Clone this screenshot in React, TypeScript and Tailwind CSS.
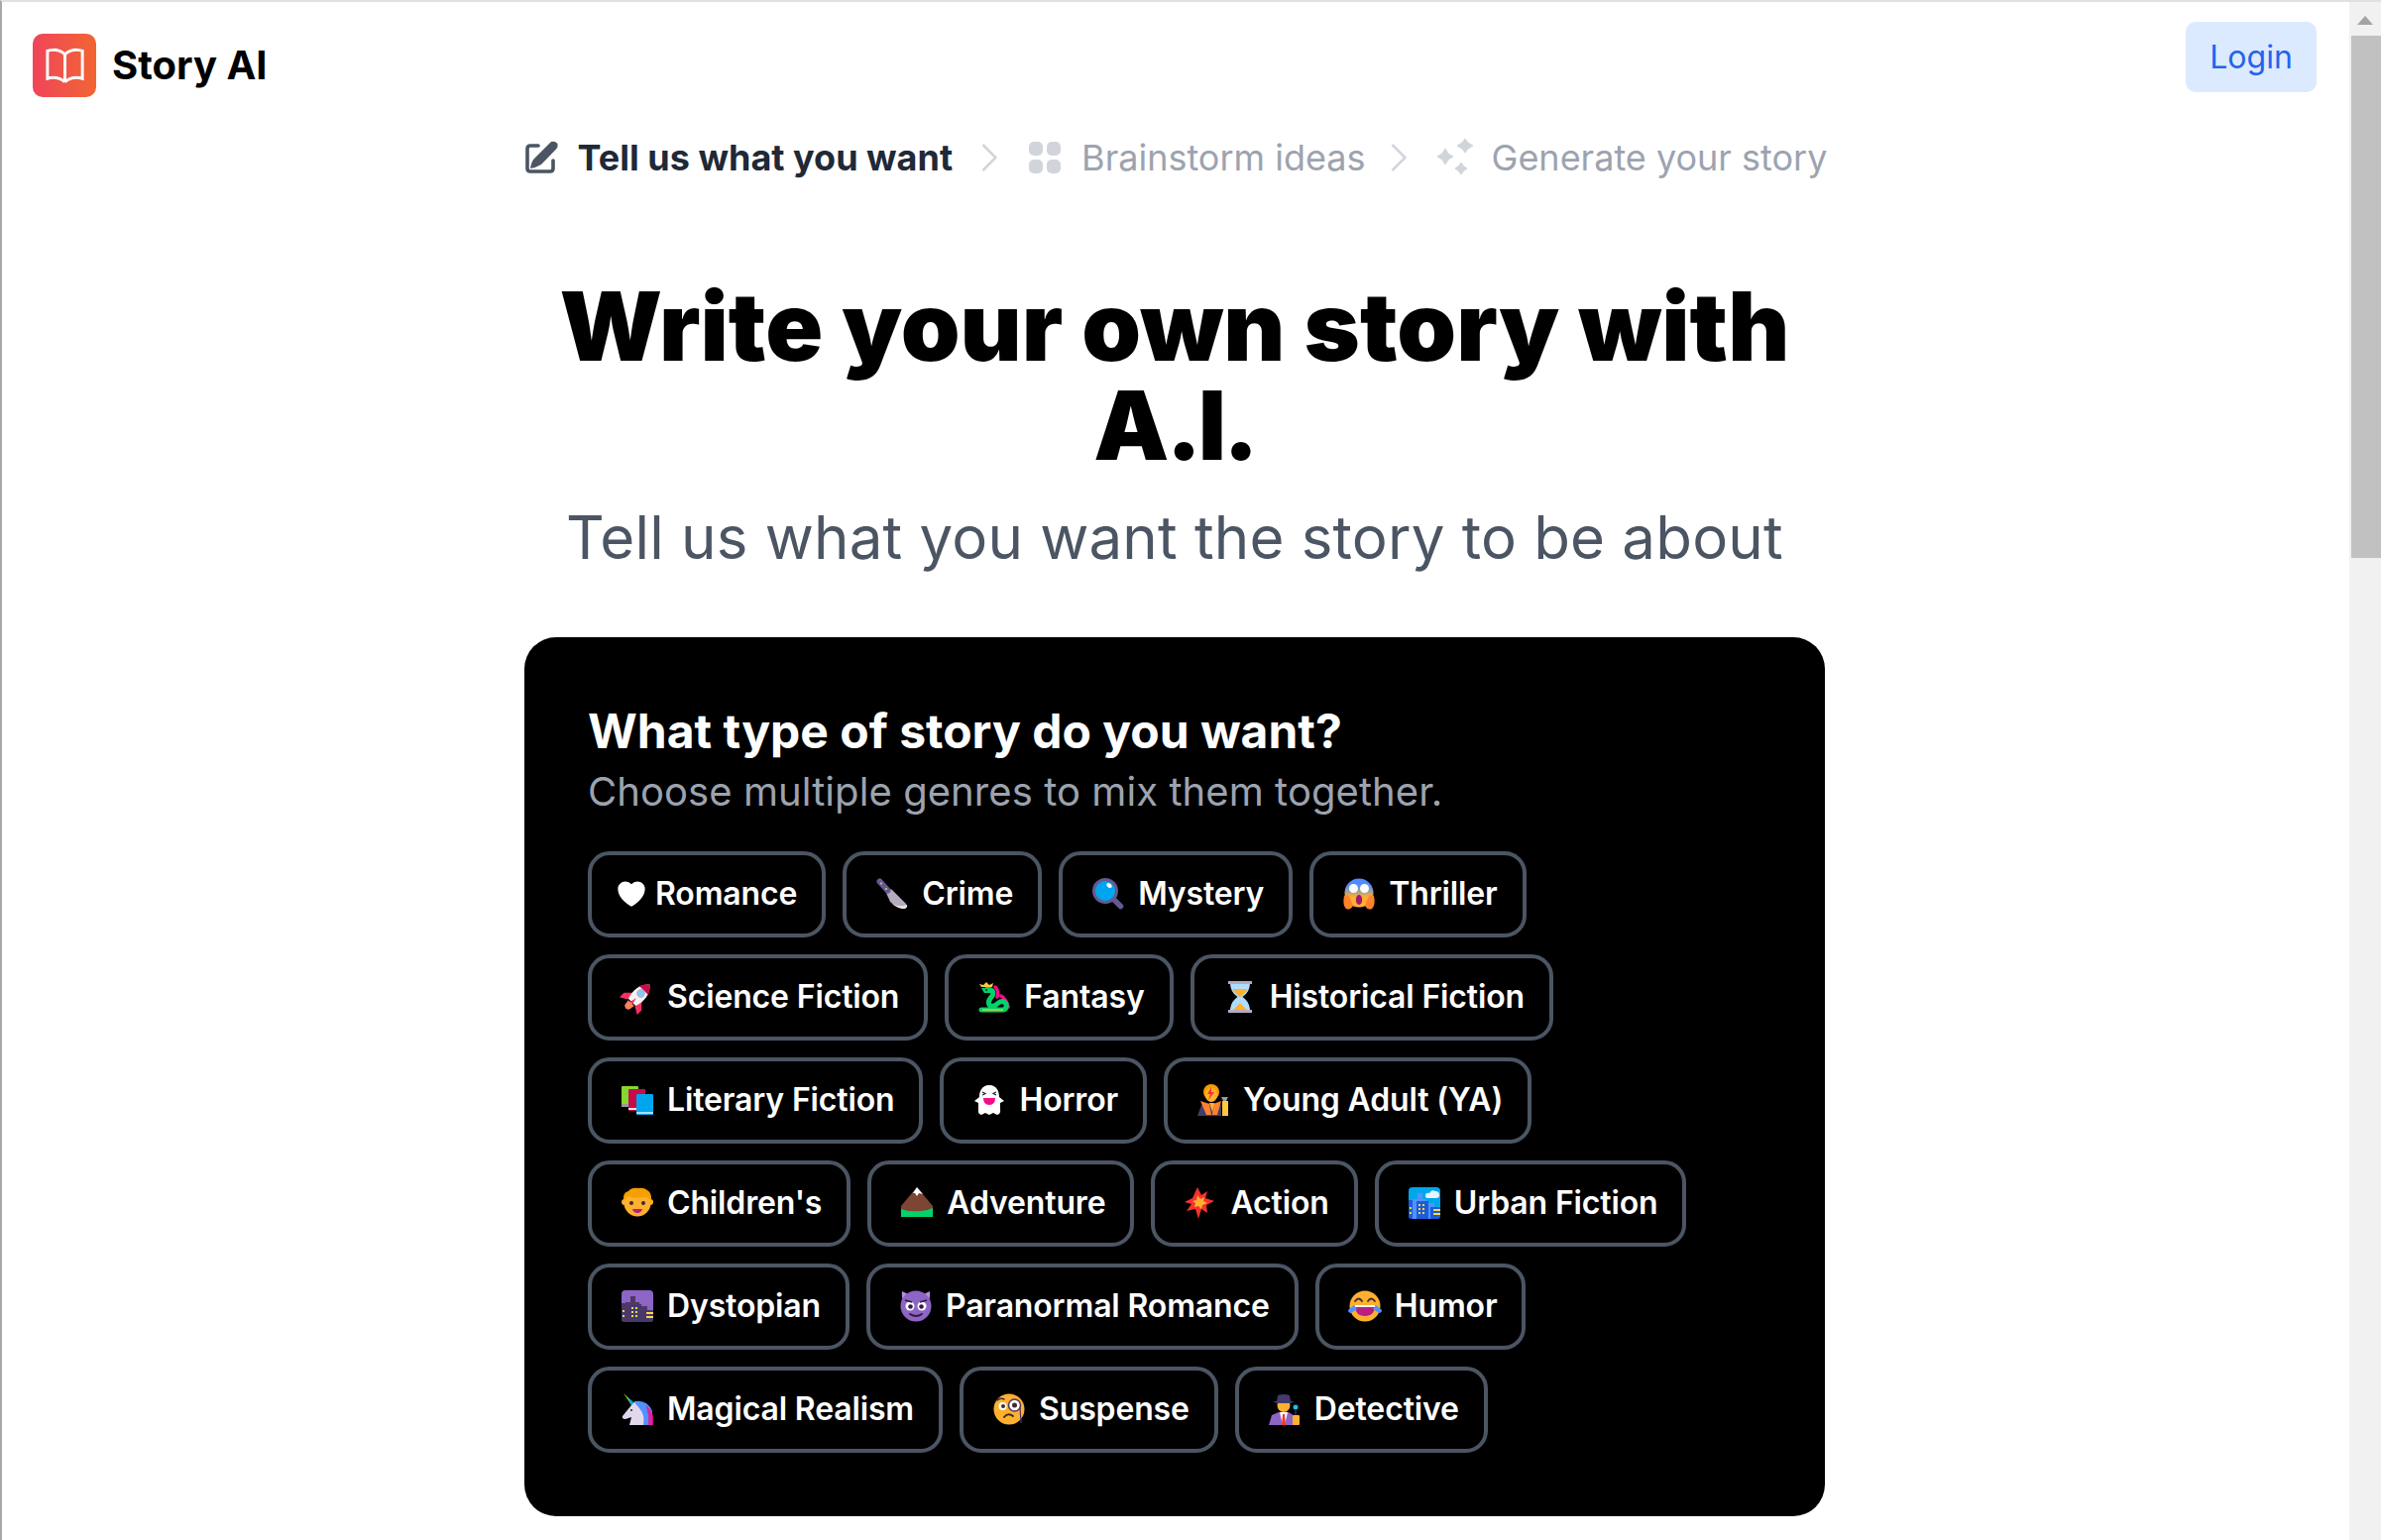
import type { ReactNode } from 'react';

function Svg({ children }: { children: ReactNode }) {
  return (
    <span className="w-10 flex justify-center">
      <svg width="32" height="32" viewBox="0 0 32 32" className="overflow-visible">{children}</svg>
    </span>
  );
}

function City({ bg, back, front, win, cloud }: { bg: string; back: string; front: string; win: string; cloud?: boolean }) {
  return (
    <Svg>
      <rect width="32" height="32" rx="4" fill={bg} />
      {cloud && <path d="M17 9Q17 5 21 6 23 2 27 4 31 4 31 8 31 11 28 11H20Q17 11 17 9Z" fill="#e6f4ff" />}
      <path d="M4 32V12h5V6h5v6h4v4h8v5h6v7q0 4-4 4Z" fill={back} />
      <path d="M0 13h4v19H3q-3 0-3-3Z" fill={front} />
      <path d="M8 32V14h12v18Z" fill={front} />
      <path d="M22 32V20h10v9q0 3-3 3Z" fill={front} />
      <path d="M10 17h2v2h-2zM14 17h2v2h-2zM10 21h2v2h-2zM14 21h2v2h-2zM10 25h2v2h-2zM14 25h2v2h-2zM1 20h2v2H1zM1 25h2v2H1z" fill={win} />
      <path d="M25 22h7v2h-7zM25 26h7v2h-7z" fill={win} />
    </Svg>
  );
}

const icons: Record<string, ReactNode> = {
  Crime: (
    <Svg>
      <path d="M10 15 15 11 30 26Q32 30 28 31 20 30 14 24Z" fill="#b4acbc" />
      <path d="M16 26Q22 31 28 31 32 30 31 27 24 30 16 26Z" fill="#e6e6e6" />
      <path d="M3.5 3.5 11.500 12.500" stroke="#635994" strokeWidth="6" strokeLinecap="round" />
      <circle cx="5" cy="5.500" r="1" fill="#ffc83d" />
      <circle cx="10" cy="11" r="1" fill="#ffc83d" />
    </Svg>
  ),
  Mystery: (
    <Svg>
      <path d="M21 21 28.500 28.500" stroke="#635994" strokeWidth="5.500" strokeLinecap="round" />
      <circle cx="13" cy="13" r="11.500" fill="#00a6ed" stroke="#635994" strokeWidth="3" />
      <ellipse cx="17" cy="7.500" rx="3" ry="2" fill="#fff" transform="rotate(35 17 7.500)" />
    </Svg>
  ),
  Thriller: (
    <Svg>
      <defs>
        <linearGradient id="scream" x1="0" y1="0" x2="0" y2="1">
          <stop offset="0.250" stopColor="#4f8cff" />
          <stop offset="0.650" stopColor="#ffb02e" />
        </linearGradient>
      </defs>
      <circle cx="16" cy="15" r="14.500" fill="url(#scream)" />
      <circle cx="10.500" cy="10.500" r="4.500" fill="#fff" />
      <circle cx="21.500" cy="10.500" r="4.500" fill="#fff" />
      <ellipse cx="16" cy="22" rx="3.200" ry="5" fill="#a3186e" />
      <path d="M1 18Q5 16 7 20L10 28Q7 33 3 31 -1 27 1 18ZM31 18Q27 16 25 20L22 28Q25 33 29 31 33 27 31 18Z" fill="#ff822d" />
    </Svg>
  ),
  'Science Fiction': (
    <Svg>
      <g transform="rotate(45 16 16) scale(1.05) translate(-0.800 -1.500)">
        <path d="M11 16 4 23V29L11 25ZM21 16 28 23V29L21 25Z" fill="#f92f60" />
        <path d="M16 0C23 6 24 15 21 24H11C8 15 9 6 16 0Z" fill="#f4f4f4" />
        <path d="M16 0C19 2.500 21 5 21.800 8H10.200C11 5 13 2.500 16 0Z" fill="#ca0b4a" />
        <circle cx="16" cy="12" r="3.500" fill="#83cbff" stroke="#b4acbc" />
        <path d="M16 18 18 27H14Z" fill="#f92f60" />
        <path d="M12 25H20L19 31Q16 34 13 31Z" fill="#ff8257" />
      </g>
    </Svg>
  ),
  Fantasy: (
    <Svg>
      <path d="M17 6 Q21 10 19 16M23 15 Q28 18 30 26" fill="none" stroke="#f70a8d" strokeWidth="3.500" strokeLinecap="round" />
      <path d="M9 8Q17 9 14 15 9 20 11 24 15 27 19 23 24 18 28 23 29 28 25 29H3" fill="none" stroke="#00d26a" strokeWidth="5" strokeLinecap="round" />
      <path d="M3 7H13V12H6Z" fill="#00d26a" />
      <path d="M1 3 5 4 8 1 11 4 15 2 14 6H3Z" fill="#ffc83d" />
      <path d="M4 29H25" stroke="#ffc83d" strokeWidth="1.200" />
      <circle cx="8" cy="9" r="1" fill="#212121" />
    </Svg>
  ),
  'Historical Fiction': (
    <Svg>
      <path d="M6 2H26Q26 11 18.500 16 26 21 26 30H6Q6 21 13.500 16 6 11 6 2Z" fill="#aeddff" />
      <path d="M8.500 8H23.500Q22 12 16 16 10 12 8.500 8Z" fill="#ffb02e" />
      <path d="M16 16V22L23 29H9L16 22Z" fill="#ffb02e" />
      <rect x="4" width="24" height="3" fill="#b4acbc" />
      <rect x="4" y="29" width="24" height="3" fill="#b4acbc" />
    </Svg>
  ),
  'Literary Fiction': (
    <Svg>
      <rect y="2" width="17" height="21" rx="1" fill="#86d72f" />
      <rect y="20" width="17" height="3" fill="#9b9b9b" />
      <rect x="7" y="5" width="17" height="22" rx="1" fill="#ca0b4a" />
      <rect x="7" y="24" width="17" height="2" fill="#e6e6e6" />
      <rect x="15" y="10" width="17" height="21" rx="1" fill="#00a6ed" />
      <rect x="15" y="28" width="17" height="2" fill="#aeddff" />
    </Svg>
  ),
  Horror: (
    <Svg>
      <path d="M16 1C8 1 6 8 6 13L1 17 5 19V25Q4 30 8 31L12 29 16 31 20 29 24 31Q28 30 27 25V19L31 17 26 13C26 8 24 1 16 1Z" fill="#fff" />
      <path d="M9 8 12 9.500 9 11M23 8 20 9.500 23 11" stroke="#212121" fill="none" strokeWidth="1.200" />
      <path d="M10 14H22Q22 21 16 21 10 21 10 14Z" fill="#f70a8d" />
    </Svg>
  ),
  'Young Adult (YA)': (
    <Svg>
      <path d="M0 32 4 21 12 19H18L24 21 24 32Z" fill="#433b6b" />
      <path d="M3 17 12 20 14 31H9ZM24 17 16 20 15 31H20Z" fill="#ff822d" />
      <path d="M12 19H17L15 28Z" fill="#ffb02e" />
      <circle cx="14" cy="8" r="8" fill="#f59f00" />
      <ellipse cx="14" cy="11" rx="6" ry="7" fill="#ffb02e" />
      <path d="M14 3 10 10 13 10 11 16 17 8 14 8Z" fill="#f8312f" />
      <path d="M24 13H31L29 17H26Z" fill="#9b9b9b" />
      <rect x="25" y="17" width="6" height="15" fill="#ffc83d" />
    </Svg>
  ),
  "Children's": (
    <Svg>
      <circle cx="3" cy="15" r="3" fill="#ffb02e" />
      <circle cx="29" cy="15" r="3" fill="#ffb02e" />
      <circle cx="16" cy="16" r="13.500" fill="#ffb02e" />
      <path d="M2 14Q1 5 7 4 10 0 17 1 22 0 26 3 31 6 30 14 26 9 21 10 14 12 7 9 4 10 2 14Z" fill="#f59f00" />
      <circle cx="10" cy="16" r="2" fill="#402a32" />
      <circle cx="22" cy="16" r="2" fill="#402a32" />
      <path d="M11 22H21Q20 26 16 26 12 26 11 22Z" fill="#bb1d80" />
    </Svg>
  ),
  Adventure: (
    <Svg>
      <path d="M16 0 32 19V30H0V19Z" fill="#7d4533" />
      <path d="M12 6 16 0 22 7 18 6 16 9 14 6Z" fill="#fff" />
      <path d="M0 22Q8 25 16 24 24 25 32 21V30H0Z" fill="#00d26a" />
    </Svg>
  ),
  Action: (
    <Svg>
      <path d="M13 0 17 8 23 4 21 11 30 14 22 18 23 26 17 22 14 32 11 22 2 24 7 17 0 15 8 11Z" fill="#f8312f" />
      <path d="M13 8 16 12 20 10 19 14 23 16 18 18 17 22 14 19 10 20 11 16 8 14 12 13Z" fill="#ffb02e" />
    </Svg>
  ),
  'Urban Fiction': <City bg="#00a6ed" back="#5092ff" front="#1c5cd6" win="#ffd54a" cloud />,
  Dystopian: <City bg="#8d65c5" back="#533566" front="#433b6b" win="#ffd54a" />,
  'Paranormal Romance': (
    <Svg>
      <path d="M2 1Q1 9 5 13L10 5ZM30 1Q31 9 27 13L22 5Z" fill="#b78ee0" />
      <circle cx="16" cy="16" r="15.500" fill="#8d65c5" />
      <circle cx="10" cy="16" r="4.500" fill="#fff" />
      <circle cx="22" cy="16" r="4.500" fill="#fff" />
      <circle cx="10.500" cy="16.500" r="2.300" fill="#321b41" />
      <circle cx="21.500" cy="16.500" r="2.300" fill="#321b41" />
      <path d="M5 10 12 12M27 10 20 12" stroke="#321b41" strokeWidth="1.500" />
      <path d="M10 24Q16 28 22 24" stroke="#321b41" strokeWidth="2" fill="none" strokeLinecap="round" />
    </Svg>
  ),
  Humor: (
    <Svg>
      <circle cx="16" cy="16" r="15.500" fill="#ffb02e" />
      <path d="M6 11Q10 6 13 11M19 11Q22 6 26 11" stroke="#402a32" strokeWidth="1.800" fill="none" strokeLinecap="round" />
      <path d="M6 15H26Q26 26 16 26 6 26 6 15Z" fill="#bb1d80" />
      <path d="M6 15H26V17H6Z" fill="#fff" />
      <path d="M5 15 -1 20Q-1 23 2 23L8 19ZM27 15 33 20Q33 23 30 23L24 19Z" fill="#5092ff" />
    </Svg>
  ),
  'Magical Realism': (
    <Svg>
      <path d="M2 0 13 10 10 12Z" fill="#86d72f" />
      <path d="M6 4 13 10 10 12Z" fill="#00a6ed" />
      <path d="M13 8Q26 6 31 18V32H21Q22 24 20 20 14 20 13 16Z" fill="#5092ff" />
      <path d="M24 12Q31 16 32 24V32H27Q28 20 24 12Z" fill="#f70a8d" opacity="0.800" />
      <path d="M13 9 10 12 1 23Q0 26 4 26L10 24 8 32H22Q24 22 18 15Z" fill="#e1d8ec" />
      <circle cx="10" cy="17" r="1" fill="#212121" />
    </Svg>
  ),
  Suspense: (
    <Svg>
      <circle cx="16" cy="16" r="15.500" fill="#ffb02e" />
      <circle cx="9.500" cy="13" r="4" fill="#fff" />
      <circle cx="10" cy="13" r="2" fill="#402a32" />
      <circle cx="21.500" cy="12" r="6" fill="#fff" stroke="#533566" strokeWidth="1.500" />
      <circle cx="21.500" cy="12" r="2.500" fill="#402a32" />
      <path d="M4 7Q7 4 11 6" stroke="#402a32" strokeWidth="1.500" fill="none" strokeLinecap="round" />
      <path d="M27 14 28 30" stroke="#533566" strokeWidth="1.200" />
      <path d="M11 24Q15 19 20 23" stroke="#402a32" strokeWidth="2" fill="none" strokeLinecap="round" />
    </Svg>
  ),
  Detective: (
    <Svg>
      <path d="M0 32 3 22 10 19H20L26 23V32Z" fill="#8d65c5" />
      <path d="M11 19H19L16 32H14Z" fill="#fff" />
      <path d="M14 21H16L17 32H13Z" fill="#f8312f" />
      <ellipse cx="15" cy="12" rx="6.500" ry="7" fill="#ffb02e" />
      <path d="M9 2Q15 0 21 2L22 8H26L22 10H8L4 8H8Z" fill="#433b6b" />
      <circle cx="27" cy="14" r="2.800" fill="#00d1ed" stroke="#321b41" />
      <path d="M26 17H28V23H26Z" fill="#321b41" />
      <rect x="24" y="22" width="7" height="10" rx="1" fill="#ffb02e" />
    </Svg>
  ),
};

const genres = [
  'Romance', 'Crime', 'Mystery', 'Thriller',
  'Science Fiction', 'Fantasy', 'Historical Fiction',
  'Literary Fiction', 'Horror', 'Young Adult (YA)',
  "Children's", 'Adventure', 'Action', 'Urban Fiction',
  'Dystopian', 'Paranormal Romance', 'Humor',
  'Magical Realism', 'Suspense', 'Detective',
];

function Chevron() {
  return (
    <svg width="16" height="28" viewBox="0 0 16 28" fill="none" stroke="#d1d5db" strokeWidth="2.500" className="shrink-0">
      <path d="M1.500 1 14.500 14 1.500 27" />
    </svg>
  );
}

export default function App() {
  return (
    <div className="flex h-[1554px] overflow-hidden border-t-2 border-l-2 border-t-[#e0e0e0] border-l-[#a8a8a8] bg-white font-['Inter',sans-serif]">
      <main className="flex-1 flex flex-col pr-[2px]">
        <header className="flex justify-between pl-[31px] pr-[31px] pt-5 h-[100px]">
          <div className="flex items-center gap-4 h-[64px] mt-[12px]">
            <div className="w-16 h-16 rounded-[10px] bg-gradient-to-r from-[#f04459] to-[#f26430] flex items-center justify-center">
              <svg width="47" height="47" viewBox="0 0 24 24" fill="none" stroke="white" strokeWidth="1.500">
                <path d="M12 6.040A8.970 8.970 0 0 0 6 3.750c-1.050 0-2.060.18-3 .51v14.250A8.990 8.990 0 0 1 6 18c2.300 0 4.410.87 6 2.290M12 6.040A8.970 8.970 0 0 1 18 3.750c1.050 0 2.060.18 3 .51v14.250A8.990 8.990 0 0 0 18 18c-2.300 0-4.410.87-6 2.290M12 6.040v14.250" />
              </svg>
            </div>
            <span className="text-[40px] font-bold text-black">Story AI</span>
          </div>
          <button className="w-[132px] h-[71px] rounded-[10px] bg-[#dbeafe] text-[#2563eb] text-[32px]">Login</button>
        </header>

        <nav className="flex items-center justify-center whitespace-nowrap pl-[2px] mt-[27px] h-[60px] text-[36px] text-[#9ca3af]">
          <svg width="34" height="34" viewBox="0 0 34 34" fill="none" className="shrink-0 mr-5">
            <path d="M14 5H6Q3 5 3 8V28Q3 31 6 31H26Q29 31 29 28V20" stroke="#4b5563" strokeWidth="3.600" strokeLinecap="round" />
            <path d="M27 1Q31 0 33.500 3 34 6 32.500 8L17 24Q12 27 6 28 7 21 10 18Z" fill="#4b5563" />
          </svg>
          <span className="font-bold text-[#1f2937] mr-[29px]">Tell us what you want</span>
          <Chevron />
          <svg width="32" height="32" viewBox="0 0 32 32" fill="#d1d5db" className="shrink-0 ml-[32px] mr-[21px]">
            <rect width="14" height="14" rx="5" />
            <rect x="18" width="14" height="14" rx="5" />
            <rect y="18" width="14" height="14" rx="5" />
            <rect x="18" y="18" width="14" height="14" rx="5" />
          </svg>
          <span className="mr-[25px]">Brainstorm ideas</span>
          <Chevron />
          <svg width="36" height="38" viewBox="0 0 36 38" fill="#d1d5db" stroke="#d1d5db" strokeLinejoin="round" className="shrink-0 ml-[31px] mr-[19px]">
            <path d="M8 10 11 15 16 18 11 21 8 26 5 21 0 18 5 15Z" strokeWidth="1" />
            <path d="M28 0 31 4 36 7 31 10 28 14 25 10 20 7 25 4Z" strokeWidth="1" />
            <path d="M24 24 26.500 27.500 30 30 26.500 32.500 24 36 21.500 32.500 18 30 21.500 27.500Z" strokeWidth="1" />
          </svg>
          <span>Generate your story</span>
        </nav>

        <h1 className="mt-[90px] text-center text-[95.800px] leading-[100px] font-black text-black">
          Write your own story with<br />
          <span className="tracking-[-3px]">A.I.</span>
        </h1>
        <p className="mt-[18px] text-center text-[60px] tracking-[0.200px] font-normal text-[#4b5563]">Tell us what you want the story to be about</p>

        <section className="mt-[56px] mx-auto w-[1312px] h-[887px] rounded-[32px] bg-black p-16">
          <h2 className="text-[48px] leading-[62px] font-bold text-white">What type of story do you want?</h2>
          <p className="text-[40px] tracking-[0.070px] font-normal text-[#9ca3af]">Choose multiple genres to mix them together.</p>
          <div className="flex flex-wrap gap-[17px] mt-[30px]">
            <button className="flex items-center gap-[10px] h-[87px] pl-[26px] pr-[25px] pb-[2px] rounded-[22px] border-4 border-[#4b5563] text-white text-[32px] font-semibold tracking-[-0.150px]">
              <svg width="28" height="28" viewBox="2 2.500 20 19" fill="white">
                <path d="m11.645 20.910-.007-.003-.022-.012a15.247 15.247 0 0 1-.383-.218 25.180 25.180 0 0 1-4.244-3.170C4.688 15.360 2.250 12.174 2.250 8.250 2.250 5.322 4.714 3 7.688 3A5.500 5.500 0 0 1 12 5.052 5.500 5.500 0 0 1 16.313 3c2.973 0 5.437 2.322 5.437 5.250 0 3.925-2.438 7.111-4.739 9.256a25.175 25.175 0 0 1-4.244 3.170 15.247 15.247 0 0 1-.383.219l-.022.012-.007.004-.003.001a.752.752 0 0 1-.704 0l-.003-.001Z" />
              </svg>
              Romance
            </button>
            {genres.slice(1).map((label) => (
              <button key={label} className="flex items-center gap-[10px] h-[87px] pl-[26px] pr-[25px] pb-[2px] rounded-[22px] border-4 border-[#4b5563] text-white text-[32px] font-semibold tracking-[-0.150px]">
                {icons[label]}
                {label}
              </button>
            ))}
          </div>
        </section>
      </main>
      <div className="w-[32px] bg-[#f1f1f1] flex flex-col">
        <div className="h-[34px] flex justify-center pt-[14px]">
          <svg width="16" height="9" viewBox="0 0 16 9" fill="#a3a3a3"><path d="M8 0 16 9H0Z" /></svg>
        </div>
        <div className="ml-[2px] h-[527px] bg-[#c1c1c1]" />
      </div>
    </div>
  );
}
